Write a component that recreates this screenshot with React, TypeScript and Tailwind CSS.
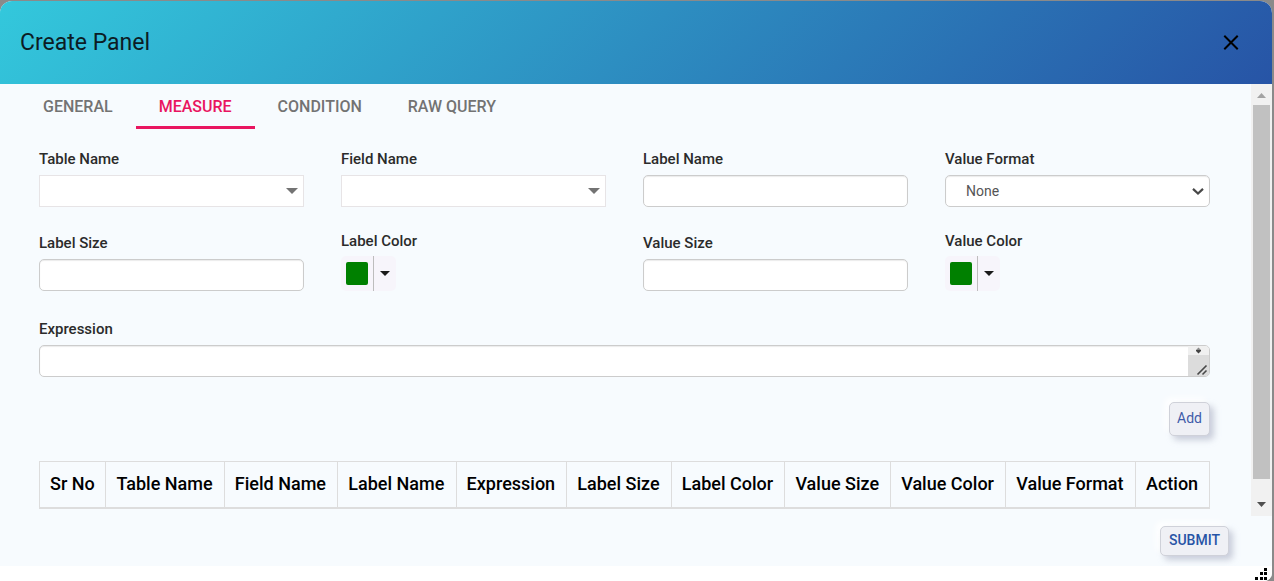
import { useState } from "react";

const tabs = ["GENERAL", "MEASURE", "CONDITION", "RAW QUERY"];

const columns = [
  "Sr No",
  "Table Name",
  "Field Name",
  "Label Name",
  "Expression",
  "Label Size",
  "Label Color",
  "Value Size",
  "Value Color",
  "Value Format",
  "Action",
];

const labelClass = "text-[15px] leading-5 font-medium text-[#2b2b2b]";
const boxClass =
  "h-8 w-full rounded-[5px] border border-[#ccc] bg-white shadow-[inset_0_1px_1px_rgba(0,0,0,0.08)] outline-none";

function TextField({ id, label }: { id: string; label: string }) {
  return (
    <div className="flex flex-col gap-1.5">
      <label htmlFor={id} className={labelClass}>
        {label}
      </label>
      <input id={id} type="text" className={`${boxClass} px-3 text-sm text-[#555]`} />
    </div>
  );
}

function ComboField({ id, label }: { id: string; label: string }) {
  return (
    <div className="flex flex-col gap-1.5">
      <label htmlFor={id} className={labelClass}>
        {label}
      </label>
      <div className="flex h-8 items-center border border-[#e7e4e6] bg-white pr-[5px]">
        <input id={id} type="text" role="combobox" aria-expanded="false" className="min-w-0 flex-1 px-2 text-sm outline-none" />
        <svg width="12" height="6" viewBox="0 0 12 6" aria-hidden="true">
          <path d="M0 0H12L6 6Z" fill="#737373" />
        </svg>
      </div>
    </div>
  );
}

function ColorField({ id, label }: { id: string; label: string }) {
  return (
    <div className="flex flex-col gap-[5px]">
      <label htmlFor={id} className={labelClass}>
        {label}
      </label>
      <button id={id} type="button" className="flex h-[35px] w-[55px] items-stretch rounded-[5px] bg-[#f7f5fb]">
        <span className="flex w-8 items-center pl-[5px]">
          <span className="h-[23px] w-[22px] rounded-[2px] bg-[#008000]" />
        </span>
        <span className="flex flex-1 items-center justify-center border-l border-[#bdbdbd]">
          <svg width="10" height="5" viewBox="0 0 10 5" aria-hidden="true">
            <path d="M0 0H10L5 5Z" fill="#1a1a1a" />
          </svg>
        </span>
      </button>
    </div>
  );
}

export default function App() {
  const [active, setActive] = useState("MEASURE");

  return (
    <div className="flex min-h-screen flex-col bg-[#8a8a8a] pt-px pr-0.5 font-['Roboto',sans-serif]">
      <div className="flex flex-1 flex-col overflow-hidden rounded-t-xl rounded-br-lg bg-white">
        <header className="flex h-[83px] items-center justify-between bg-[linear-gradient(135deg,#33c8dc_0%,#2754a6_100%)] pr-[33px] pl-5">
          <h1 className="text-[23px] leading-8 text-[#0c1c24]">Create Panel</h1>
          <button type="button" aria-label="Close">
            <svg width="16" height="16" viewBox="0 0 16 16" aria-hidden="true">
              <path d="M2 1.500L14 13.500M14 1.500L2 13.500" stroke="#000" strokeWidth="2" strokeLinecap="square" />
            </svg>
          </button>
        </header>

        <div className="flex bg-[#f7fbfe]">
          <main className="min-w-0 flex-1 pr-[41px] pb-[7px] pl-[39px]">
            <nav role="tablist" className="-ml-[19px] flex h-[45px]">
              {tabs.map((tab) => (
                <button
                  key={tab}
                  type="button"
                  role="tab"
                  aria-selected={tab === active}
                  onClick={() => setActive(tab)}
                  className={
                    tab === active
                      ? "border-b-3 border-[#e91560] px-[23px] pt-1 text-base font-medium text-[#e91560]"
                      : "border-b-3 border-transparent px-[23px] pt-1 text-base font-medium text-[#737373]"
                  }
                >
                  {tab}
                </button>
              ))}
            </nav>

            <form className="mt-5 flex flex-col" onSubmit={(e) => e.preventDefault()}>
              <div className="grid grid-cols-4 items-end gap-x-[37px] gap-y-6">
                <ComboField id="table-name" label="Table Name" />
                <ComboField id="field-name" label="Field Name" />
                <TextField id="label-name" label="Label Name" />
                <div className="flex flex-col gap-1.5">
                  <label htmlFor="value-format" className={labelClass}>
                    Value Format
                  </label>
                  <div className="grid items-center">
                    <select
                      id="value-format"
                      className={`${boxClass} col-start-1 row-start-1 appearance-none px-5 text-sm text-[#555]`}
                    >
                      <option>None</option>
                    </select>
                    <svg
                      className="pointer-events-none col-start-1 row-start-1 mr-1.5 justify-self-end"
                      width="12"
                      height="7"
                      viewBox="0 0 12 7"
                      aria-hidden="true"
                    >
                      <path d="M1 0.900L6 5.500L11 0.900" fill="none" stroke="#484848" strokeWidth="2.2" />
                    </svg>
                  </div>
                </div>
                <TextField id="label-size" label="Label Size" />
                <ColorField id="label-color" label="Label Color" />
                <TextField id="value-size" label="Value Size" />
                <ColorField id="value-color" label="Value Color" />
              </div>

              <div className="mt-7 flex flex-col gap-1.5">
                <label htmlFor="expression" className={labelClass}>
                  Expression
                </label>
                <div className={`${boxClass} flex overflow-hidden`}>
                  <textarea id="expression" rows={1} className="min-w-0 flex-1 resize-none overflow-hidden px-3 py-1 text-sm text-[#555] outline-none" />
                  <svg width="21" height="30" viewBox="0 0 21 30" aria-hidden="true">
                    <path d="M0 0H21V9H0Z" fill="#f0f0f0" />
                    <path d="M0 9H21V30H0Z" fill="#dcdcdc" />
                    <path d="M10.500 1.500L13 4H8Z" fill="#8a8a8a" />
                    <path d="M8 4H13V5L10.500 7.500L8 5Z" fill="#444" />
                    <path d="M9.500 28.500L18.500 19.500M14.500 28.500L18.500 24.500" stroke="#484848" strokeWidth="1.6" />
                  </svg>
                </div>
              </div>

              <button
                type="submit"
                className="mt-[25px] h-[34px] self-end rounded-[5px] border border-[#cfd1d9] bg-[#eff0f5] px-[7px] pb-0.5 text-sm text-[#3f5ba9] shadow-[4px_4px_6px_rgba(176,182,200,0.65),-4px_-4px_6px_#ffffff]"
              >
                Add
              </button>
            </form>

            <table className="mt-[25px] w-full border-collapse border border-[#ddd]">
              <thead>
                <tr>
                  {columns.map((name) => (
                    <th
                      key={name}
                      scope="col"
                      className="h-[46px] border border-b-2 border-[#ddd] px-2.5 text-left text-lg leading-6 font-medium whitespace-nowrap text-black"
                    >
                      {name}
                    </th>
                  ))}
                </tr>
              </thead>
            </table>
          </main>

          <div aria-hidden="true" className="flex w-[21px] flex-col items-center bg-[#f1f1f1]">
            <svg width="21" height="21" viewBox="0 0 21 21">
              <path d="M6 14L10.5 9L15 14Z" fill="#a3a3a3" />
            </svg>
            <div className="w-[17px] flex-1 bg-[#c1c1c1]" />
            <svg className="mt-4" width="21" height="21" viewBox="0 0 21 21">
              <path d="M6 7H15L10.5 12Z" fill="#505050" />
            </svg>
          </div>
        </div>

        <footer className="flex h-[50px] items-start justify-end bg-[#f7fbfe] pt-2.5 pr-[43px]">
          <button
            type="button"
            className="h-[30px] rounded-[5px] border border-[#cfd1d9] bg-[#eff0f5] px-2 pb-0.5 text-sm font-medium text-[#2754a6] shadow-[4px_4px_6px_rgba(176,182,200,0.65),-4px_-4px_6px_#ffffff]"
          >
            SUBMIT
          </button>
        </footer>

        <div className="flex flex-1 items-end justify-end bg-white pr-[5px] pb-px">
          <svg width="12" height="12" viewBox="0 0 12 12" shapeRendering="crispEdges" aria-hidden="true">
            <path
              d="M9 0h3v3h-3zM5 4h3v3h-3zM9 4h3v3h-3zM0 9h3v3h-3zM5 9h3v3h-3zM9 9h3v3h-3z"
              fill="#000"
            />
          </svg>
        </div>
      </div>
    </div>
  );
}
